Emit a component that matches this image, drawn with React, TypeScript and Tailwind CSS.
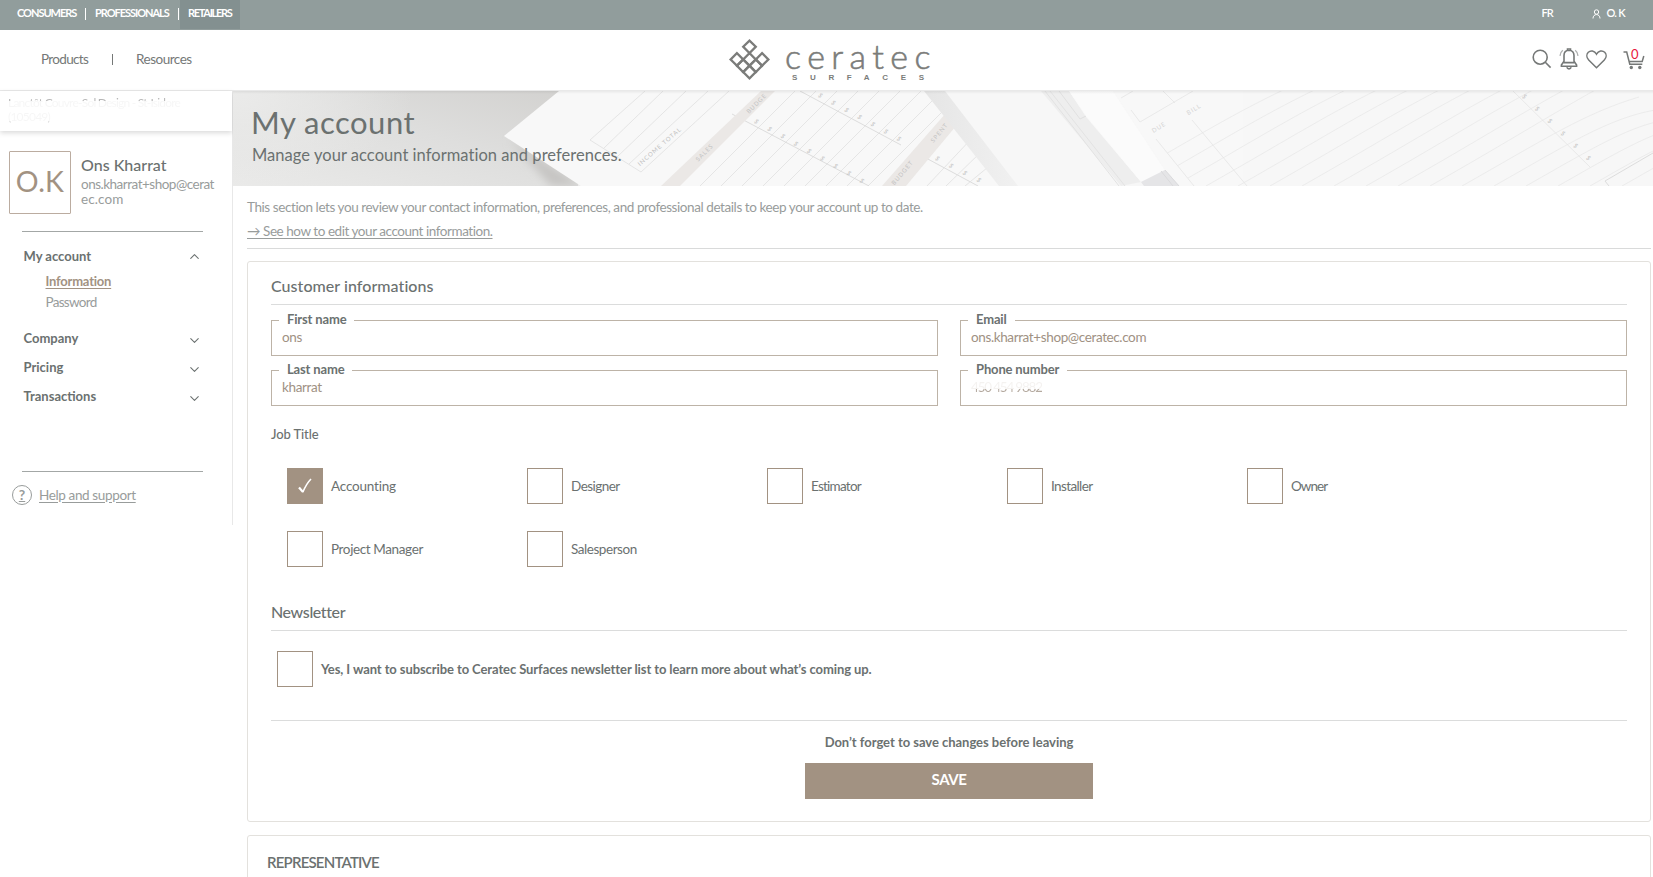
import React, { useState } from 'react';
import { ChevronDown, ChevronUp } from 'lucide-react';

const JOB_TITLES = [
  { name: 'Accounting', tracking: 'tracking-[-0.2px]' },
  { name: 'Designer', tracking: 'tracking-[-0.53px]' },
  { name: 'Estimator', tracking: 'tracking-[-0.75px]' },
  { name: 'Installer', tracking: 'tracking-[-0.62px]' },
  { name: 'Owner', tracking: 'tracking-[-0.95px]' },
  { name: 'Project Manager', tracking: 'tracking-[-0.38px]' },
  { name: 'Salesperson', tracking: 'tracking-[-0.45px]' },
];

const range = (n: number) => Array.from({ length: n }, (_, i) => i);

const Logo = () => (
  <svg width="206" height="44" viewBox="0 0 206 44" className="overflow-visible text-[#7b7c7a]">
    <g transform="translate(21.5 21.5) rotate(45)" fill="none" stroke="currentColor" strokeWidth="2.3">
      <rect x="-13.4" y="-13.4" width="8.9" height="8.9" />
      <rect x="-4.5" y="-4.5" width="8.9" height="8.9" />
      <rect x="4.4" y="-4.5" width="8.9" height="8.9" />
      <rect x="-4.5" y="4.4" width="8.9" height="8.9" />
      <rect x="4.4" y="4.4" width="8.9" height="8.9" />
      <rect x="4.4" y="-13.4" width="8.9" height="8.9" />
      <rect x="-13.4" y="4.4" width="8.9" height="8.9" />
    </g>
    <text x="57" y="30.5" fontSize="34" fontWeight="300" textLength="145.5" fill="currentColor" stroke="currentColor" strokeWidth=".6" className="font-['Lato',sans-serif]">ceratec</text>
    <text x="64" y="42" fontSize="8" fontWeight="700" textLength="132" lengthAdjust="spacing" fill="currentColor" className="font-['Liberation_Sans',sans-serif]">SURFACES</text>
  </svg>
);

const HeaderIcons = () => (
  <div className="mb-[2px] flex items-center text-[#757877]">
    <svg width="20" height="20" viewBox="0 0 20 20" fill="none" stroke="currentColor" strokeWidth="1.6">
      <circle cx="8.2" cy="8.2" r="7" />
      <path d="M13.3 13.3 18.6 18.6" />
    </svg>
    <svg width="20" height="22" viewBox="0 0 20 22" fill="none" stroke="currentColor" strokeWidth="1.6" className="ml-[7px]">
      <path d="M10 2.3c-3.3 0-5 2.3-5 5.3v5.6L2.4 17v1.300h15.2V17L15 13.2V7.600c0-3-1.700-5.300-5-5.300Z" />
      <path d="M4.500 14.600h11M8.500 2.300V1h3v1.300" />
      <path d="M7.800 19.300c.4 1.100 1.100 1.600 2.200 1.600s1.800-.5 2.200-1.600" />
      <path d="M3.800 2.300C2.200 3.500 1.300 5.300 1 7.800M16.200 2.300c1.600 1.200 2.500 3 2.800 5.500" strokeWidth="1.300" opacity=".6" />
    </svg>
    <svg width="21" height="19" viewBox="0 0 21 19" fill="none" stroke="currentColor" strokeWidth="1.500" className="ml-[7px]">
      <path d="M10.500 17.800 2.700 10C.3 7.500.4 4.200 2.300 2.300 4.500.2 8.500.5 10.500 4.200 12.500.5 16.500.2 18.700 2.300c1.900 1.900 2 5.200-.4 7.700Z" />
    </svg>
    <div className="relative ml-4 mt-[2px]">
      <svg width="22" height="19" viewBox="0 0 22 19" fill="none" stroke="currentColor" strokeWidth="1.500">
        <path d="M.5 1h3.200L6.800 13.200h12.500M6 10.400h13.200L20.800 5" />
        <circle cx="8.300" cy="16.500" r="1.700" fill="currentColor" stroke="none" />
        <circle cx="16.800" cy="16.500" r="1.700" fill="currentColor" stroke="none" />
      </svg>
      <span className="absolute left-[8px] -top-[3px] text-[13px] leading-[13px] text-[#e8193c]">0</span>
    </div>
  </div>
);

const BannerArt = () => (
  <svg width="1420" height="95" viewBox="0 0 1420 95" className="absolute inset-0">
    <defs>
      <linearGradient id="desk" x1="0" y1="1" x2="1" y2="0">
        <stop offset="0" stopColor="#eaeae9" />
        <stop offset=".55" stopColor="#dededd" />
        <stop offset="1" stopColor="#d2d1cf" />
      </linearGradient>
      <radialGradient id="glow" cx="0" cy="0" r="1">
        <stop offset="0" stopColor="#ebebea" />
        <stop offset="1" stopColor="#ebebea" stopOpacity="0" />
      </radialGradient>
      <linearGradient id="strap" x1="0" y1="0" x2="1" y2="0">
        <stop offset="0" stopColor="#e5e5e5" />
        <stop offset="1" stopColor="#f1f1f1" />
      </linearGradient>
      <filter id="soft"><feGaussianBlur stdDeviation="4" /></filter>
      <clipPath id="sheet"><path d="M447 95 542 0h150l32 36-51 59Z" /></clipPath>
      <clipPath id="pad"><path d="M923 48 1005 0h415v95H961Z" /></clipPath>
    </defs>
    <rect width="1420" height="95" fill="#f7f7f7" />
    <path d="M0 0h345v95H0Z" fill="url(#desk)" />
    <path d="M0 0h180v95H0Z" fill="url(#glow)" />
    <path d="M276 48 350 95H318Z" fill="#c6c5c3" filter="url(#soft)" />
    <path d="M326 0 271 45 348 95h420L700 0Z" fill="#f8f8f8" />

    <g fill="none" stroke="#e0e0e0" strokeWidth=".8">
      <path d="M412 0 357 49l51 32L496 0M430 0 371 57M453 0 384 66M475 0 396 73" />
      <g clipPath="url(#sheet)">
        {range(13).map((i) => <path key={i} d={`M${467 + i * 21} 95 ${562 + i * 21} 0`} />)}
      </g>
      <path d="M499 23 636 95M567 0 668 54M680 60 745 95" stroke="#d6d6d6" />
      <path d="M694 95 740 46M713 95 750 59M732 95 760 72" />
    </g>
    <path d="M528 0h14L447 95h-19Z" fill="#ebe8e6" />
    <path d="m713 22 10 13-50 60h-24Z" fill="#ebe8e6" />

    <path d="M691 0h21l73 95h-19Z" fill="url(#strap)" />
    <path d="M808 0h28l17 26 55 65-20 4Z" fill="#eeeeee" />
    <path d="M817 0 892 95M812 0 886 95" stroke="#e2e2e2" strokeWidth="1" />
    <path d="M826 0 847 28 853 25" stroke="#e0e0e0" fill="none" />
    <path d="M836 0 853 25 908 91 932 79 880 0Z" fill="#fbfbfb" />
    <path d="M880 0 932 79 946 95H1010V0Z" fill="#f8f8f8" />
    <path d="M908 91 932 79 946 95H911Z" fill="#e5e5e7" />
    <path d="M932 79 946 95M928 80 940 95" stroke="#dadadc" />

    <g fill="none" stroke="#e9e9e9" strokeWidth=".8">
      <g clipPath="url(#pad)">
        {range(17).map((i) => (
          <path key={i} d={`M${877 + i * 32} 95 C${960 + i * 32} 48 ${1000 + i * 32} 22 ${1065 + i * 31} ${i < 11 ? -8 : (i - 11) * 11 + 6}`} />
        ))}
      </g>
      <path d="M898 19 907 31 960 0M888 7 900 0M923 48 961 95M959 29 1014 95M930 0 942 12M1280 0 1357 76" stroke="#e4e4e4" />
      <path d="M1420 62 1372 90l4 5" stroke="#d6d6d6" />
    </g>

    <g className="font-['Lato',sans-serif]" fill="#c2c2c2" fontSize="6" textAnchor="middle">
      <text transform="translate(428 57) rotate(-41)" letterSpacing="1">INCOME TOTAL</text>
      <text transform="translate(473 63) rotate(-45)" letterSpacing="1">SALES</text>
      <text transform="translate(525 14) rotate(-45)" letterSpacing="1">BUDGE</text>
      <text transform="translate(708 43) rotate(-50)" letterSpacing="1">SPENT</text>
      <text transform="translate(671 83) rotate(-50)" letterSpacing="1">BUDGET</text>
      <text transform="translate(927 38) rotate(-32)" fill="#d2d2d2" letterSpacing="1">DUE</text>
      <text transform="translate(962 20) rotate(-32)" fill="#d2d2d2" letterSpacing="1">BILL</text>
      {range(9).map((i) => <text key={i} transform={`translate(${522 + i * 13.2} ${32 + i * 7.4}) rotate(45)`}>$</text>)}
      {range(7).map((i) => <text key={i} transform={`translate(${586 + i * 13.1} ${6 + i * 7.200}) rotate(45)`}>$</text>)}
      {range(4).map((i) => <text key={i} transform={`translate(${703 + i * 13.800} ${69 + i * 7.200}) rotate(45)`}>$</text>)}
      {range(6).map((i) => <text key={i} transform={`translate(${1290 + i * 12.800} ${7 + i * 12.300}) rotate(45)`}>$</text>)}
    </g>
  </svg>
);

const SectionTitle = ({ children, className = 'tracking-[0.05px]' }: { children: React.ReactNode; className?: string }) => (
  <h2 className={`border-b border-[#dbdcdc] pb-[6px] text-[16px] leading-6 font-medium text-[#6b7170] ${className}`}>{children}</h2>
);

const Field = ({ label, children }: { label: string; children: React.ReactNode }) => (
  <div className="relative h-9 border border-[#bdb3a7] pl-[10px] pt-1">
    <label className="absolute left-[7px] -top-[9px] bg-white px-2 text-[13px] leading-[15px] font-bold tracking-[-0.15px] text-[#6b7170]">{label}</label>
    <div className="text-[13.5px] leading-6 tracking-[-0.38px] text-[#a09183]">{children}</div>
  </div>
);

const Checkbox = ({ checked, onClick }: { checked: boolean; onClick: () => void }) => (
  <button
    onClick={onClick}
    className={`flex h-9 w-9 shrink-0 items-center justify-center border border-[#a29282] ${checked ? 'bg-[#a29282]' : 'bg-white'}`}
  >
    {checked && (
      <svg width="14" height="16" viewBox="0 0 14 16" fill="none" stroke="white">
        <path d="M1 9.500 5 14" strokeWidth="2.200" />
        <path d="M4.800 14.300C7 9 9.500 4.500 13 1" strokeWidth="1.600" />
      </svg>
    )}
  </button>
);

const MenuItem = ({ label, open = false, className = '' }: { label: string; open?: boolean; className?: string }) => (
  <div className={`flex h-5 items-center justify-between pl-[23.5px] pr-[30px] text-[13px] leading-5 font-bold text-[#6b7170] ${className}`}>
    <span>{label}</span>
    {open ? <ChevronUp className="h-[15px] w-[15px]" strokeWidth={1.7} /> : <ChevronDown className="mt-[4px] h-[15px] w-[15px]" strokeWidth={1.7} />}
  </div>
);

const Sidebar = () => (
  <aside className="h-[434px] w-[233px] shrink-0 border-r border-[#e8e8e8]">
    <div className="h-10 pl-2 pt-[5px] shadow-[0_2px_5px_rgba(0,0,0,0.15)]">
      <p className="w-[200px] bg-[linear-gradient(#b5b5b5_5px,#f6f6f6_5px,#f6f6f6_25px,#d8d8d8_25px)] bg-clip-text text-[12px] leading-[14px] tracking-[-0.78px] text-transparent">
        Lanctôt Couvre-Sol Design - St-Isidore<br />(105049)
      </p>
    </div>
    <div className="mt-5 flex gap-[10px] pl-[9px]">
      <div className="flex h-[63px] w-[62px] items-center justify-center rounded-[1px] border border-[#bbaca0] pb-[2px] text-[28.5px] leading-none tracking-[0.2px] text-[#a29282]">O.K</div>
      <div className="pt-1">
        <div className="text-[16px] leading-5 font-medium text-[#6b7170]">Ons Kharrat</div>
        <div className="mt-[2px] text-[13.5px] leading-[15px] tracking-[-0.5px] text-[#989c9b]">ons.kharrat+shop@cerat<br /><span className="tracking-[0.1px]">ec.com</span></div>
      </div>
    </div>
    <div className="ml-[22px] mt-[17px] h-px w-[181px] bg-[#a3a7a6]" />
    <MenuItem label="My account" open className="mt-[14px]" />
    <ul className="mt-[5px] pl-[45.5px] leading-[21px] text-[#989c9b]">
      <li className="text-[13px] font-bold tracking-[-0.22px] text-[#a29282] underline underline-offset-2">Information</li>
      <li className="text-[13.5px] tracking-[-0.7px]">Password</li>
    </ul>
    <MenuItem label="Company" className="mt-[15px]" />
    <MenuItem label="Pricing" className="mt-[9px]" />
    <MenuItem label="Transactions" className="mt-[9px]" />
    <div className="ml-[22px] mt-[65px] h-px w-[181px] bg-[#a3a7a6]" />
    <div className="mt-[13px] flex items-center gap-[7px] pl-3 text-[#989c9b]">
      <span className="flex h-5 w-5 items-center justify-center rounded-full border border-[#989c9b] text-[14px] leading-none font-bold underline">?</span>
      <a className="pb-px text-[13.5px] leading-[18px] tracking-[-0.37px] underline underline-offset-2">Help and support</a>
    </div>
  </aside>
);

export default function App() {
  const [selected, setSelected] = useState('Accounting');
  const [subscribed, setSubscribed] = useState(false);

  return (
    <div className="flex h-[877px] w-full flex-col overflow-hidden bg-white font-['Lato','Noto_Sans',sans-serif] text-[#6b7170]">
      {/* Top bar */}
      <div className="flex h-[30px] shrink-0 items-start bg-[#919d9c] text-[11px] leading-[26px] font-bold text-white">
        <span className="w-[68px] pl-[17px] tracking-[-1.03px]">CONSUMERS</span>
        <span className="ml-[17px] mt-[8px] h-[12px] w-px bg-white" />
        <span className="ml-[9px] w-[83px] tracking-[-1.04px]">PROFESSIONALS</span>
        <span className="mt-[8px] h-[12px] w-px bg-white" />
        <span className="ml-px h-[29px] w-[60px] bg-[#839090] pl-2 tracking-[-1.3px]">RETAILERS</span>
        <div className="ml-auto flex items-start pr-7 font-semibold">
          <span className="tracking-[-1.2px]">FR</span>
          <svg width="9" height="10" viewBox="0 0 9 10" fill="none" stroke="white" className="ml-10 mt-[9px]">
            <circle cx="4.500" cy="3" r="2.200" />
            <path d="M1 9.500C1 7 2.500 5.600 4.500 5.600S8 7 8 9.500" />
          </svg>
          <span className="ml-[5px] tracking-[-0.7px]">O. K</span>
        </div>
      </div>

      {/* Navigation */}
      <header className="grid h-[60px] shrink-0 grid-cols-3 items-center">
        <nav className="flex items-center pb-px pl-[41px] text-[13.5px] text-[#757877]">
          <span className="w-[71px] tracking-[-0.67px]">Products</span>
          <span className="h-[11px] w-px bg-[#757877]" />
          <span className="ml-[23px] tracking-[-0.5px]">Resources</span>
        </nav>
        <div className="flex justify-center pl-[8px]"><Logo /></div>
        <div className="flex justify-end pr-2"><HeaderIcons /></div>
      </header>
      <div className="h-px shrink-0 bg-[#e9e9e9]" />

      <div className="flex min-h-0 flex-1">
        <Sidebar />

        <main className="min-w-0 flex-1">
          <section className="relative h-[95px] overflow-hidden pl-[18px] pt-[13px]">
            <BannerArt />
            <div className="absolute inset-x-0 top-0 h-[3px] bg-linear-to-b from-black/6 to-transparent" />
            <h1 className="relative text-[31px] leading-9 tracking-[0.5px]">My account</h1>
            <p className="relative mt-[3px] pl-px text-[16.5px] leading-6 tracking-[0.04px]">Manage your account information and preferences.</p>
          </section>

          <div className="pl-[14px] pr-[2px]">
            <div className="mt-[9px] text-[13.5px] leading-6 tracking-[-0.42px] text-[#989c9b]">
              <p>This section lets you review your contact information, preferences, and professional details to keep your account up to date.</p>
              <a className="block tracking-[-0.45px] underline underline-offset-2">→ See how to edit your account information.</a>
            </div>
            <div className="mt-[5px] h-px bg-[#d9dada]" />

            <section className="mt-3 rounded-[3px] border border-[#e3e1dd] px-[23px] pb-[22px] pt-3">
              <SectionTitle>Customer informations</SectionTitle>
              <div className="mt-[15px] grid grid-cols-2 gap-x-[22px] gap-y-[14px]">
                <Field label="First name">ons</Field>
                <Field label="Email">ons.kharrat+shop@ceratec.com</Field>
                <Field label="Last name">kharrat</Field>
                <Field label="Phone number">
                  <span className="bg-[linear-gradient(#f4f2f0_65%,#b5aaa0_65%)] bg-clip-text tracking-[-1.2px] text-transparent">450 454 9882</span>
                </Field>
              </div>

              <h3 className="mt-[18px] text-[13px] leading-5 font-medium tracking-[-0.1px]">Job Title</h3>
              <div className="mt-6 grid grid-cols-[repeat(5,240px)] gap-y-[27px] pl-4">
                {JOB_TITLES.map(({ name, tracking }) => (
                  <div key={name} className="flex items-center gap-2">
                    <Checkbox checked={selected === name} onClick={() => setSelected(name)} />
                    <span className={`pb-px text-[13.5px] leading-5 ${tracking}`}>{name}</span>
                  </div>
                ))}
              </div>

              <SectionTitle className="mt-[33px] tracking-[-0.38px]">Newsletter</SectionTitle>
              <div className="ml-[6px] mt-5 flex items-center gap-2">
                <Checkbox checked={subscribed} onClick={() => setSubscribed(!subscribed)} />
                <span className="text-[13px] leading-5 font-bold tracking-[-0.09px]">
                  Yes, I want to subscribe to Ceratec Surfaces newsletter list to learn more about what’s coming up.
                </span>
              </div>

              <div className="mt-[33px] h-px bg-[#dbdcdc]" />
              <p className="mt-[11px] text-center text-[13px] leading-5 font-bold tracking-[-0.03px]">Don’t forget to save changes before leaving</p>
              <button className="mx-auto mt-[11px] block h-9 w-72 bg-[#a29282] pb-[3px] text-[15px] font-bold tracking-[-0.46px] text-white">SAVE</button>
            </section>

            <section className="mt-[13px] h-[200px] rounded-[3px] border border-[#e3e1dd] pl-[19px] pt-[14px]">
              <h2 className="text-[15px] leading-6 font-semibold tracking-[-0.8px]">REPRESENTATIVE</h2>
            </section>
          </div>
        </main>
      </div>
    </div>
  );
}
